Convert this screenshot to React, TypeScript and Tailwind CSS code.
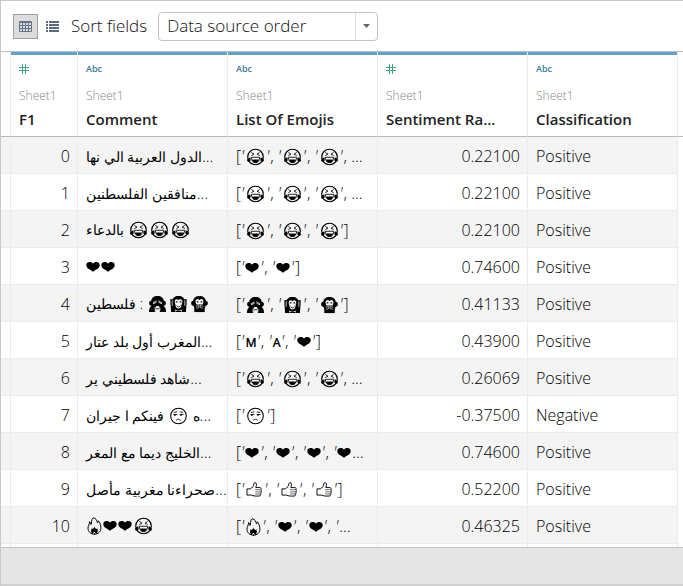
import type { ReactNode } from "react";

const line = { fill: "none", stroke: "#000", strokeLinecap: "round" as const };

function Joy() {
  return (
    <svg role="img" aria-label="face with tears of joy" viewBox="0 0 20 18" className="mx-px inline-block h-[18px] w-[19px] align-[-4px]">
      <circle cx="10" cy="9" r="8.2" {...line} strokeWidth="1.2" />
      <path d="M6 4.500 8.400 6 6 7.300M14 4.500 11.600 6 14 7.300" {...line} strokeWidth=".9" />
      <path d="M5.700 9.300h8.600c0 3.600-1.700 5.700-4.300 5.700s-4.300-2.100-4.300-5.700Z" fill="#fff" stroke="#000" strokeWidth=".9" />
      <path d="M6.200 12c1.800-.6 5.800-.6 7.600 0-.6 2-2 3-3.800 3s-3.200-1-3.800-3Z" />
      <path d="M4.600 9.400C2.600 9.600 1 10.900 1.200 12.700c.2 1.600 2.400 1.900 3.200.6.600-1 .6-2.400.2-3.900ZM15.400 9.400c2 .2 3.600 1.500 3.400 3.300-.2 1.600-2.400 1.900-3.200.6-.6-1-.6-2.400-.2-3.900Z" />
    </svg>
  );
}

function Unamused() {
  return (
    <svg role="img" aria-label="unamused face" viewBox="0 0 20 18" className="mx-px inline-block h-[18px] w-[19px] align-[-4px]">
      <circle cx="10" cy="9" r="8.2" {...line} strokeWidth="1.1" />
      <path d="M5.500 5.200 8.300 4.700M11.700 4.700l2.800.5M5 7.400h3.400M11.600 7.400H15M7.800 13.300c1.200-1.200 3.200-1.200 4.400 0" {...line} strokeWidth=".9" />
      <path d="M5.200 7.500h1.800v1.300H5.200zM11.800 7.500h1.800v1.300h-1.800z" />
    </svg>
  );
}

function Heart() {
  return (
    <svg role="img" aria-label="heart" viewBox="0 0 14 10" className="mr-px inline-block h-[10px] w-[14px] align-[0px]">
      <path d="M7 9.800C5.500 7.800.3 6.800.3 3.200.3 1.300 1.800.1 3.700.1 5.200.1 6.400.7 7 1.700 7.600.7 8.800.1 10.300.1c1.900 0 3.400 1.200 3.400 3.100 0 3.600-5.200 4.600-6.700 6.600Z" />
    </svg>
  );
}

function Monkey({ kind }: { kind: "see" | "hear" | "speak" }) {
  const label = { see: "see-no-evil monkey", hear: "hear-no-evil monkey", speak: "speak-no-evil monkey" }[kind];
  return (
    <svg role="img" aria-label={label} viewBox="0 0 20 18" className="mx-px inline-block h-[18px] w-[19px] align-[-4px]">
      <path d="M10 .6c4 0 6.300 2.200 6.600 5 1.500.1 2.200 1.200 2.200 2.600 0 1.500-.9 2.600-2.300 2.700C15.600 13.800 13 16 10 16s-5.600-2.200-6.500-5.100C2.100 10.800 1.200 9.700 1.200 8.200c0-1.400.7-2.500 2.200-2.600C3.700 2.800 6 .6 10 .6Z" />
      {kind === "see" && (
        <>
          <path d="M1 17.500c0-3.500 1-6 3.500-7l3.300 7ZM19 17.500c0-3.500-1-6-3.500-7l-3.300 7Z" />
          <path d="M5 7.500 8.800 5v2.800L5.600 9.200ZM15 7.500 11.200 5v2.800l3.200 1.400Z" fill="#f4f4f4" />
          <path d="M6.300 6v2.500M7.600 5.500v2.500M12.400 5.500v2.500M13.700 6v2.500" stroke="#000" strokeWidth=".5" />
          <path d="M6.800 13.200 9 11h2l2.200 2.200C12.600 15.400 11.500 16.600 10 16.600s-2.600-1.200-3.200-3.400Z" fill="#f4f4f4" />
          <path d="M8 13.400c1.200 1 2.800 1 4 0" {...line} strokeWidth="1" />
        </>
      )}
      {kind === "hear" && (
        <>
          <path d="M1.200 4h3.600l2 13.500H2.200ZM18.800 4h-3.600l-2 13.500h4.600Z" />
          <path d="M2 5.500v5M3.600 5v6M18 5.500v5M16.400 5v6" stroke="#f4f4f4" strokeWidth=".6" />
          <path d="M6 6.500C6 3.800 9 3.300 10 5c1-1.700 4-1.200 4 1.500 0 1.800-.8 2.300-.8 3.300 0 2.300-1.200 3.900-3.200 3.900s-3.200-1.600-3.200-3.900c0-1-.8-1.500-.8-3.300Z" fill="#f4f4f4" />
          <path d="M7.200 6.700h1.600M11.200 6.700h1.600" stroke="#000" strokeWidth="1.300" />
          <path d="M8.200 11c1.100 1.500 2.500 1.500 3.600 0" {...line} strokeWidth=".9" />
          <path d="M6.500 17.500c.5-2 6.500-2 7 0Z" />
        </>
      )}
      {kind === "speak" && (
        <>
          <path d="M5.800 6.500C5.800 3.500 9 3 10 5c1-2 4.200-1.500 4.200 1.500l-.8 3H6.600Z" fill="#f4f4f4" />
          <path d="M7.200 6.700h1.600M11.200 6.700h1.600" stroke="#000" strokeWidth="1.300" />
          <path d="M4.500 17.500v-5h11v5Z" />
          <path d="M6 11.500 9.300 10.400v2.400L6.400 13.500M14 11.500l-3.300-1.100v2.400l2.900.7" fill="none" stroke="#f4f4f4" strokeWidth=".7" />
        </>
      )}
    </svg>
  );
}

function Thumb() {
  return (
    <svg role="img" aria-label="thumbs up" viewBox="0 0 18 17" className="mx-px inline-block h-[16px] w-[17px] align-[-3px]">
      <path d="M1 7.300h3.600c2-1 3.400-2.800 3.900-6 .2-.9 2.300-.9 2.500.6.2 1.600-.2 2.800-.6 4H14.600c1.400 0 1.900 1.300 1.200 2.200.8.600.8 1.800 0 2.300.6.800.4 1.700-.4 2.200.4 1.100-.2 2.200-1.400 2.300-3.200.2-6.200.1-8.200-1H1Z" fill="#fff" stroke="#000" strokeLinejoin="round" />
      <path d="M10 8.200h5.500M10.200 10.500h5.400M10.200 12.700h5" {...line} strokeWidth=".6" />
    </svg>
  );
}

function Fire() {
  return (
    <svg role="img" aria-label="fire" viewBox="0 0 15 18" className="mx-px inline-block h-[18px] w-[15px] align-[-4px]">
      <path d="M7.500 17.200C3.500 17.200 1 14.600 1 11.200 1 9 2.400 7.600 2.600 4.600c1 .8 1.300 2 1.300 2.900C5.300 5.700 3.600 3 6.200.8 9 1 10 3.400 10.400 5.800c.8-.5 1-1 1-2 1.600 2 2.500 4.700 2.500 7.400 0 3.400-2.400 6-6.400 6Z" {...line} />
      <path d="M7.400 9.500c.3 1.400 1.300 1.800 1.800 2.700l1-1c1.200 2.400.6 4.800-1.400 6 0-1.200-.5-1.800-1.400-2.500-.8.700-1.400 1.300-1.400 2.500-2-1.200-2.600-3.600-1.200-6l1 1c.4-.9 1.300-1.300 1.600-2.700Z" />
    </svg>
  );
}

const glyphs: Record<string, ReactNode> = {
  "😂": <Joy />,
  "😒": <Unamused />,
  "❤": <Heart />,
  "🙈": <Monkey kind="see" />,
  "🙉": <Monkey kind="hear" />,
  "🙊": <Monkey kind="speak" />,
  "👍": <Thumb />,
  "🔥": <Fire />,
  "'": <i className="pr-px">'</i>,
  "ᴍ": <span className="font-['Noto_Sans','DejaVu_Sans',sans-serif] font-normal">ᴍ</span>,
  "ᴀ": <span className="font-['Noto_Sans','DejaVu_Sans',sans-serif] font-normal">ᴀ</span>,
  "...": <span className="text-base leading-5">...</span>,
};

function RichText({ text }: { text: string }) {
  return (
    <>
      {text.split(/(😂|😒|❤|🙈|🙉|🙊|👍|🔥|ᴍ|ᴀ|'|\.\.\.)/u).map((part, i) => (
        <span key={i}>{glyphs[part] ?? part}</span>
      ))}
    </>
  );
}

const columns = [
  { name: "F1", type: "number" },
  { name: "Comment", type: "text" },
  { name: "List Of Emojis", type: "text" },
  { name: "Sentiment Ra...", type: "number" },
  { name: "Classification", type: "text" },
];

const rows = [
  ["الدول العربية الي نها...", "['😂', '😂', '😂', ...", "0.22100", "Positive"],
  ["منافقين الفلسطنين...", "['😂', '😂', '😂', ...", "0.22100", "Positive"],
  ["بالدعاء 😂😂😂", "['😂', '😂', '😂']", "0.22100", "Positive"],
  ["❤❤", "['❤', '❤']", "0.74600", "Positive"],
  ["فلسطين : 🙈🙉🙊", "['🙈', '🙉', '🙊']", "0.41133", "Positive"],
  ["المغرب أول بلد عتار...", "['ᴍ', 'ᴀ', '❤']", "0.43900", "Positive"],
  ["شاهد فلسطيني ير...", "['😂', '😂', '😂', ...", "0.26069", "Positive"],
  ["ه 😒 فينكم ا جيران...", "['😒']", "-0.37500", "Negative"],
  ["الخليج ديما مع المغر...", "['❤', '❤', '❤', '❤...", "0.74600", "Positive"],
  ["صحراءنا مغربية مأصل...", "['👍', '👍', '👍']", "0.52200", "Positive"],
  ["🔥❤❤😂", "['🔥', '❤', '❤', '...", "0.46325", "Positive"],
];

const edge = "border-r border-[#ebebeb]";

function TypeMark({ type }: { type: string }) {
  return type === "number" ? (
    <svg role="img" aria-label="Number" viewBox="0 0 10 10" className="h-[10px] w-[10px]">
      <path d="M3.500 0v10M6.500 0v10M0 3.500h10M0 6.500h10" stroke="#3fa67e" fill="none" />
    </svg>
  ) : (
    <span className="text-[9px] font-semibold leading-[10px] text-[#37799b]">Abc</span>
  );
}

export default function App() {
  return (
    <main className="border-l border-t border-[#c8c8c8] bg-white font-['Open_Sans','DejaVu_Sans',sans-serif] text-black">
      <div className="flex h-[51px] items-center border-b border-[#bdbdbd] pl-3">
        <button type="button" aria-label="Grid view" aria-pressed="true" className="flex h-[25px] w-[25px] items-center justify-center border border-[#a0a0a0] bg-[#dcdcdc]">
          <svg viewBox="0 0 13 11" className="h-[11px] w-[13px]">
            <path d="M.5.5h12v10H.5zM0 1.500h13M0 4.500h13M0 7.500h13M3.500 1v10M6.500 1v10M9.500 1v10" fill="none" stroke="#67758b" />
          </svg>
        </button>
        <button type="button" aria-label="List view" className="ml-2 flex h-[25px] items-center">
          <svg viewBox="0 0 13 11" className="h-[11px] w-[13px]">
            <path d="M0 1h2M3 1h10M0 4h2M3 4h10M0 7h2M3 7h10M0 10h2M3 10h10" fill="none" stroke="#5d6b82" strokeWidth="2" />
          </svg>
        </button>
        <label htmlFor="sort" className="ml-3 text-[17px] font-light text-[#111]">Sort fields</label>
        <div className="relative ml-[11px]">
          <select id="sort" className="h-[29px] w-[220px] appearance-none rounded-sm border border-[#c3c3c3] bg-white pl-2 text-[17px] font-light leading-5 text-[#111]">
            <option>Data source order</option>
          </select>
          <div className="pointer-events-none absolute inset-y-px right-px flex w-[22px] items-center justify-center border-l border-[#dedede]">
            <svg viewBox="0 0 7 4" className="h-1 w-[7px]"><path d="M0 0h7L3.500 4Z" fill="#666" /></svg>
          </div>
        </div>
      </div>
      <div className="h-[496px] overflow-hidden border-b border-[#c4c4c4]">
        <table className="w-full table-fixed border-separate border-spacing-0">
          <colgroup>
            <col className="w-[10px]" />
            <col className="w-[67px]" />
            <col className="w-[150px]" />
            <col className="w-[150px]" />
            <col className="w-[150px]" />
            <col className="w-[150px]" />
            <col />
          </colgroup>
          <thead>
            <tr>
              <td className={`border-b border-b-[#b8b8b8] ${edge}`} />
              {columns.map((c) => (
                <th key={c.name} scope="col" className={`border-b border-b-[#b8b8b8] p-0 text-left align-top ${edge}`}>
                  <div className="h-[3px] bg-[#5fa2c8]" />
                  <div className="flex h-[81px] flex-col whitespace-nowrap pl-2 pt-[9px]">
                    <TypeMark type={c.type} />
                    <span className="mt-3 text-xs font-light leading-5 text-[#888]">Sheet1</span>
                    <span className="mt-px text-[15px] font-semibold leading-6 text-[#222]">{c.name}</span>
                  </div>
                </th>
              ))}
              <td className="border-b border-b-[#b8b8b8]" />
            </tr>
          </thead>
          <tbody>
            {[...rows, null].map((row, i) => {
              const cell = `h-[37px] overflow-hidden whitespace-nowrap border-b border-b-[#ebebeb] pl-2 pr-[7px] pb-0 pt-0.5 ${edge} ${i % 2 ? "bg-white" : "bg-[#f4f4f4]"}`;
              return (
                <tr key={i} className="text-base font-light leading-5">
                  <td className={cell} />
                  <td className={`${cell} text-right`}>{row ? i : ""}</td>
                  <td className={`${cell} text-sm leading-5`}>{row && <RichText text={row[0]} />}</td>
                  <td className={cell}>{row && <RichText text={row[1]} />}</td>
                  <td className={`${cell} text-right`}>{row?.[2]}</td>
                  <td className={cell}>{row?.[3]}</td>
                  <td />
                </tr>
              );
            })}
          </tbody>
        </table>
      </div>
      <footer className="h-[38px] border-b-2 border-[#d0d0d0] bg-[#e5e5e5]" />
    </main>
  );
}
